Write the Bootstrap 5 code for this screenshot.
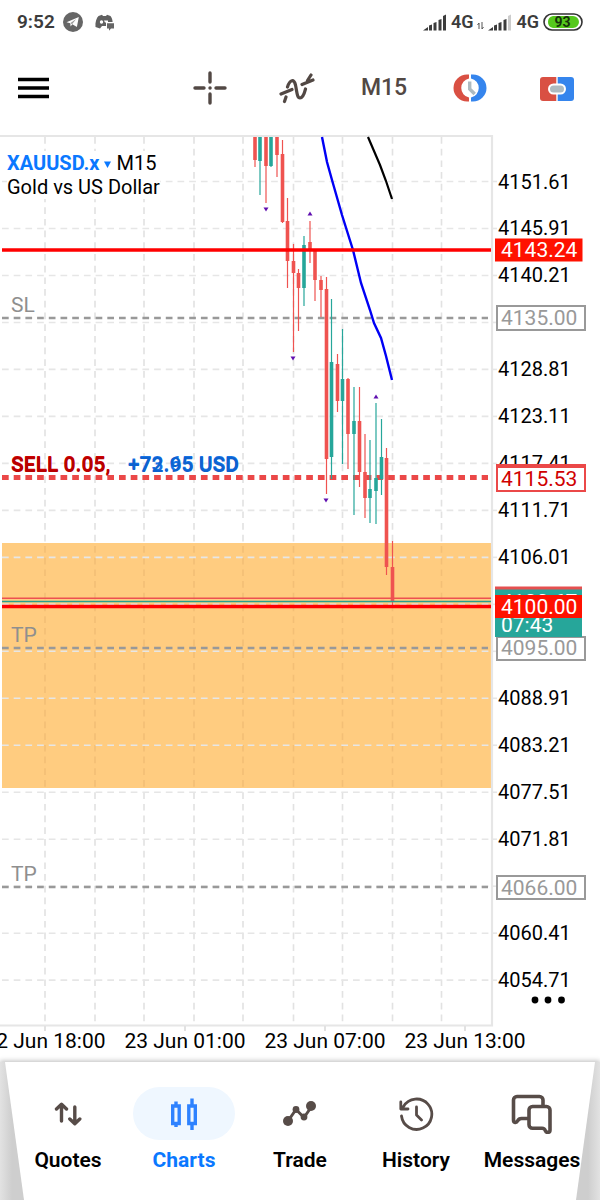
<!DOCTYPE html>
<html lang="en">
<head>
<meta charset="utf-8">
<meta name="viewport" content="width=device-width, initial-scale=1">
<title>XAUUSD.x M15</title>
<link href="https://cdn.jsdelivr.net/npm/bootstrap@5.3.0/dist/css/bootstrap.min.css" rel="stylesheet">
<style>
  body { font-family: Roboto, "Liberation Sans", sans-serif; background: #fff; color: #000; font-size: 20px; line-height: 24px; }
  button { font-family: inherit; }
  .status-strip { height: 44px; padding: 0 17px 0 17px; color: #3c3c3c; font-size: 19px; font-weight: 600; }
  .status-strip svg { display: block; }
  .network { font-size: 18px; }
  .tool-strip { height: 88px; }
  .tool-menu { width: 28%; padding-left: 18px; }
  .tool-set { width: 72%; }
  .plain-btn { border: 0; background: none; padding: 0; color: inherit; }
  .timeframe { font-size: 23px; font-weight: 500; color: #524844; }
  .chart-title { top: 19px; left: 7px; line-height: 24px; background: #fff; }
  .chart-title h1 { font-size: 20px; line-height: 24px; font-weight: 400; margin: 0; }
  .symbol-btn { color: #0a78ff; font-weight: 700; line-height: 24px; }
  .chart-more { right: 34px; bottom: 52px; line-height: 0; }
  .chart-svg { display: block; width: 100%; height: auto; }
  .chart-svg text { font-family: Roboto, "Liberation Sans", sans-serif; font-size: 20px; }
  .chart-svg .date-label, .chart-svg .price-tags text, .chart-svg .line-labels text { font-size: 21px; }
  .chart-svg .order-label { font-size: 21px; font-weight: 600; }
  .tab-shell { background: linear-gradient(90deg, #e2e2e2, #cecece 12px, #cecece calc(100% - 12px), #e2e2e2); box-shadow: 0 -1px 5px #bbb; }
  .tab-strip { min-height: 138px; padding: 25px 10px 0; background: #fff; clip-path: polygon(5px 0, calc(100% - 5px) 0, calc(100% - 24px) 100%, 24px 100%); }
  .tab-link { color: #000; font-size: 21px; font-weight: 600; text-decoration: none; flex: 1 1 0; min-width: 0; white-space: nowrap; }
  .tab-link.chosen { color: #0a78ff; font-weight: 700; }
  .tab-icon { width: 102px; height: 53px; border-radius: 27px; color: #574c48; margin-bottom: 8px; }
  .chosen .tab-icon { background: #eff7ff; color: #2e82ff; }
</style>
</head>
<body class="d-flex flex-column min-vh-100">

<div class="status-strip d-flex align-items-center justify-content-between">
  <div class="d-flex align-items-center gap-2">
    <span>9:52</span>
    <svg width="20" height="20" viewBox="0 0 20 20" aria-hidden="true"><circle cx="10" cy="10" r="10" fill="#666"/><path d="M3.500 10.200 15.800 5.100 13.900 15 9.300 12.300 7.600 14.400 7.300 11.200z" fill="#fff"/><path d="M7.500 11.100 13.200 7.100 9 12.200" fill="#999"/></svg>
    <svg class="ms-1" width="20" height="17" viewBox="0 0 20 17" aria-hidden="true"><path d="M.5 13C0 8 1.500 4 3.500 2L7 .8 8 2h3L12 .8 15.500 2C17 4 17.500 6 17.600 8H11v4H7L5 14.500z" fill="#606060"/><circle cx="6.500" cy="8" r="1.700" fill="#fff"/><path d="M9 6.500h4v2H10z" fill="#fff"/><path d="M11.200 8.300h8.800v7h-3l-2 1.700h-3.800z" fill="#fff"/><path d="M12 9.200h7v5.300h-3L14 16.700v-2.200h-2z" fill="#666"/></svg>
  </div>
  <div class="d-flex align-items-center gap-1 network">
    <svg width="24" height="17" viewBox="0 0 24 17" fill="#3c3c3c" aria-hidden="true"><path d="M0 16.500 5 13v3.500zM6 11.500l3-1v6H6zM10.500 9l3-1v8.500h-3zM15.500 6l3-1v11.500h-3zM20 2l3-1.500v16h-3z"/></svg>
    <span>4G</span>
    <svg class="mt-2" width="7" height="8" viewBox="0 0 7 8" fill="none" stroke="#555" aria-hidden="true"><path d="M2 1v6M.5 3 2 1M5 0v7M6.500 5 5 7"/></svg>
    <svg width="24" height="17" viewBox="0 0 24 17" fill="#3c3c3c" aria-hidden="true"><path d="M0 16.500 5 13v3.500zM6 11.500l3-1v6H6zM10.500 9l3-1v8.500h-3zM15.500 6l3-1v11.500h-3z"/><path d="M20 2l3-1.500v16h-3z" fill="#ccc"/></svg>
    <span>4G</span>
    <svg width="40" height="18" viewBox="0 0 40 18" aria-label="Battery 93 percent"><rect x="1" y="1" width="38" height="16" rx="8" fill="#fff" stroke="#333" stroke-width="1.600"/><path d="M10 3h20a6 6 0 0 1 0 12H10a6 6 0 0 1-5-6 6 6 0 0 1 5-6z" fill="#55c81c"/><text x="19.500" y="14" text-anchor="middle" font-size="14" font-weight="700" fill="#16320a">93</text></svg>
  </div>
</div>

<header class="tool-strip d-flex align-items-center">
  <div class="tool-menu">
    <button class="plain-btn d-block" type="button" aria-label="Menu"><svg class="d-block" width="31" height="22" viewBox="0 0 31 22"><path d="M0 2.500h31M0 11h31M0 19.500h31" stroke="#000" stroke-width="3.400"/></svg></button>
  </div>
  <div class="tool-set d-flex align-items-center">
    <button class="plain-btn flex-fill w-100" type="button" aria-label="Crosshair"><svg width="36" height="34" viewBox="0 0 36 34" fill="none" stroke="#524844" stroke-width="3.400" stroke-linecap="round"><path d="M17 2v9M17 23v9M2 17h9M23 17h9M17 17h.1"/></svg></button>
    <button class="plain-btn flex-fill w-100" type="button" aria-label="Indicators"><svg width="38" height="32" viewBox="0 0 38 32" fill="none" stroke="#524844" stroke-width="3.200" stroke-linecap="round"><path d="M2 22 13 17.500M23 12.500 34 8M5.500 29.500 7 25M8.500 15C11 7 15 7 16.500 13 18 20 18 26 21 26 24 26 25.500 21 26.500 17M28.500 8.500 32 3"/></svg></button>
    <button class="plain-btn flex-fill w-100 timeframe" type="button">M15</button>
    <button class="plain-btn flex-fill w-100" type="button" aria-label="Open clock"><svg width="34" height="28" viewBox="0 0 34 28"><path d="M16 .5H14a13.500 13.500 0 0 0 0 27h2v-4A9.700 9.700 0 0 1 16 4.500z" fill="#d95043"/><path d="M18 .5h2a13.500 13.500 0 0 1 0 27h-2v-4a9.700 9.700 0 0 0 0-19z" fill="#3585ed"/><path d="M16.700 7.500V15l5 5" fill="none" stroke="#aebbc1" stroke-width="3.400"/></svg></button>
    <button class="plain-btn flex-fill w-100" type="button" aria-label="New order"><svg width="34" height="24" viewBox="0 0 34 24"><path d="M16.300 0H3a3 3 0 0 0-3 3v18a3 3 0 0 0 3 3h13.300z" fill="#d95043"/><path d="M17.700 0H31a3 3 0 0 1 3 3v18a3 3 0 0 1-3 3H17.700z" fill="#3585ed"/><rect x="9" y="7.500" width="16" height="9" rx="4.500" fill="#aebbc1" stroke="#fff" stroke-width="2"/></svg></button>
  </div>
</header>

<main class="position-relative">
  <svg class="chart-svg" viewBox="0 132 600 930" role="img" aria-label="Gold vs US Dollar candlestick chart">
    <g id="verticals" stroke="#e2e2e2" stroke-width="1.600" stroke-dasharray="6.700 5"></g>
    <rect x="2" y="543" width="489" height="245" fill="#ffcc80"/>
    <g id="zoneVerticals" stroke="#f3bf76" stroke-width="1.600" stroke-dasharray="6.700 5"></g>
    <g id="horizontals" stroke="#e6e6e6" stroke-width="1.600"></g>
    <path d="M0 136H492V1025.500H0" fill="none" stroke="#e6e6e6" stroke-width="2.200"/>
    <path d="M45 1026v5M185 1026v5M325 1026v5M465 1026v5" stroke="#e2e2e2" stroke-width="2"/>
    <g stroke="#999" stroke-width="2.600" stroke-dasharray="6.700 5"><path d="M2 318H488"/><path d="M2 648H488"/><path d="M2 887H488"/></g>
    <path d="M2 477.500H488" stroke="#eb4848" stroke-width="5" stroke-dasharray="6.700 5"/>
    <g id="candles"></g>
    <path d="M322 137 327 162 332 180 342 215 353 250 361 283 370 310 374 323 381 338 386 356 392 380" fill="none" stroke="#0000f5" stroke-width="2.400"/>
    <path d="M368 137 380 165 386 181 392 199" fill="none" stroke="#000" stroke-width="2.200"/>
    <g fill="#6010b0"><path d="M263.500 207.500h5l-2.500 4zM290.500 356.500h5l-2.500 4zM323.500 498.500h5l-2.500 4zM307.500 215.500h5l-2.500-4zM373.500 398.500h5l-2.500-4z"/></g>
    <path d="M2 250H491M2 606.500H491" stroke="#f00" stroke-width="3.300"/>
    <path d="M2 598.300H491" stroke="#ed5050" stroke-width="1.500"/>
    <path d="M2 601.500H491" stroke="#26a08f" stroke-width="1.500"/>
    <g class="line-labels" fill="#8f8f8f"><text x="11" y="312">SL</text><text x="11" y="642">TP</text><text x="11" y="881">TP</text></g>
    <g class="order-group">
      <text class="order-label" x="11" y="471" fill="#d00000">SELL 0.05,</text><text class="order-label" x="11" y="472" fill="#b80000">SELL 0.05,</text>
      <text class="order-label" x="128" y="471" fill="#1673e6">+73.65 USD</text><text class="order-label" x="128" y="472" fill="#0d62cf">+72.95 USD</text>
    </g>
    <g id="prices"></g>
    <g class="price-tags">
      <rect x="495" y="238.500" width="87.500" height="23" fill="#f10"/><text x="501" y="257" fill="#fff">4143.24</text>
      <rect x="497" y="306" width="88" height="24" fill="#fff" stroke="#999" stroke-width="2"/><text x="501" y="325" fill="#999">4135.00</text>
      <rect x="497" y="466" width="88" height="25" fill="#fff" stroke="#eb4848" stroke-width="2"/><path d="M496 466h90" stroke="#eb4848" stroke-width="4"/><text x="501" y="486" fill="#d00000">4115.53</text>
      <rect x="497" y="637" width="88" height="23" fill="#fff" stroke="#999" stroke-width="2"/><text x="501" y="655" fill="#999">4095.00</text>
      <rect x="495" y="587" width="87" height="50" fill="#26a69a"/><path d="M495 588h87" stroke="#e55050" stroke-width="3"/>
      <text x="501" y="609" fill="#fff">4100.67</text><text x="501" y="632" fill="#fff">07:43</text>
      <rect x="495" y="595" width="87" height="23" fill="#f10"/><text x="501" y="614" fill="#fff">4100.00</text>
      <rect x="497" y="876" width="88" height="23" fill="#fff" stroke="#999" stroke-width="2"/><text x="501" y="895" fill="#999">4066.00</text>
    </g>
    <g text-anchor="middle"><text class="date-label" x="45" y="1048">22 Jun 18:00</text><text class="date-label" x="185" y="1048">23 Jun 01:00</text><text class="date-label" x="325" y="1048">23 Jun 07:00</text><text class="date-label" x="465" y="1048">23 Jun 13:00</text></g>
  </svg>
  <div class="chart-title position-absolute">
    <h1><button class="plain-btn symbol-btn" type="button">XAUUSD.x <svg width="7" height="7" viewBox="0 0 7 7" class="align-middle" aria-hidden="true"><path d="M0 .5h7L3.500 7z" fill="currentColor"/></svg></button> M15</h1>
    <div>Gold vs US Dollar</div>
  </div>
  <button class="plain-btn chart-more position-absolute" type="button" aria-label="More"><svg width="36" height="20" viewBox="0 0 36 20"><circle cx="5" cy="10" r="3.400"/><circle cx="18" cy="10" r="3.400"/><circle cx="31.500" cy="10" r="3.400"/></svg></button>
</main>

<div class="tab-shell mt-auto position-relative">
  <nav class="tab-strip d-flex align-items-start" aria-label="Main">
    <a class="tab-link d-flex flex-column align-items-center" href="#quotes"><span class="tab-icon d-flex align-items-center justify-content-center"><svg width="28" height="24" viewBox="0 0 28 24" fill="none" stroke="currentColor" stroke-width="3.400" stroke-linecap="round" stroke-linejoin="round"><path d="M7.500 19V2.500M2.500 7 7.500 2.300 12.500 7M20.800 5v16.500M15.800 17l5 4.700 5-4.700"/></svg></span>Quotes</a>
    <a class="tab-link chosen d-flex flex-column align-items-center" href="#charts" aria-current="page"><span class="tab-icon d-flex align-items-center justify-content-center"><svg width="28" height="34" viewBox="0 0 28 34" fill="none" stroke="currentColor" stroke-width="3.400"><path d="M2.700 9h6.500v17.500H2.700zM6 4.500v4M6 27v3M18.800 9h6.500v17.500h-6.500zM22 1.500v7M22 27v6"/></svg></span>Charts</a>
    <a class="tab-link d-flex flex-column align-items-center" href="#trade"><span class="tab-icon d-flex align-items-center justify-content-center"><svg width="36" height="28" viewBox="0 0 36 28" fill="currentColor"><path d="M6 21 14 9.500 22 17.500 30 6" fill="none" stroke="currentColor" stroke-width="3"/><circle cx="6" cy="21" r="5"/><circle cx="14" cy="9.500" r="3.400"/><circle cx="22" cy="17" r="3.400"/><circle cx="29" cy="6" r="5"/></svg></span>Trade</a>
    <a class="tab-link d-flex flex-column align-items-center" href="#history"><span class="tab-icon d-flex align-items-center justify-content-center"><svg width="36" height="36" viewBox="0 0 36 36" fill="none" stroke="currentColor" stroke-width="2.800" stroke-linecap="round" stroke-linejoin="round"><path d="M3.500 20A15.200 15.200 0 1 0 5.500 10.500M2.800 6v7H10M3 12.500 6 10M18.500 11v8l5 5"/></svg></span>History</a>
    <a class="tab-link d-flex flex-column align-items-center" href="#messages"><span class="tab-icon d-flex align-items-center justify-content-center"><svg width="42" height="40" viewBox="0 0 42 40" fill="none" stroke="currentColor" stroke-width="3.600" stroke-linejoin="round"><path d="M32 12V6a3.500 3.500 0 0 0-3.500-3.500H6A3.500 3.500 0 0 0 2.500 6v20c0 3 3 3 4 1 1-2 2-2.500 4-2.500h7"/><path d="M21.500 12.500h14A3.500 3.500 0 0 1 39 16v20c0 3-3.500 3-4.500 1-.7-2-1.500-2.700-3.500-2.700h-9.500A3.500 3.500 0 0 1 18 30.800V16a3.500 3.500 0 0 1 3.500-3.500z"/></svg></span>Messages</a>
  </nav>
</div>

<script src="https://cdn.jsdelivr.net/npm/bootstrap@5.3.0/dist/js/bootstrap.bundle.min.js"></script>
<script>
  const NS = 'http://www.w3.org/2000/svg';
  const draw = (parent, tag, attrs, text) => {
    const node = document.createElementNS(NS, tag);
    for (const key in attrs) node.setAttribute(key, attrs[key]);
    if (text) node.textContent = text;
    document.getElementById(parent).appendChild(node);
  };
  [45, 95, 144, 194, 243, 293.5, 342.5, 392.5, 441.5].forEach(x => {
    draw('verticals', 'path', { d: `M${x} 137V1025` });
    draw('zoneVerticals', 'path', { d: `M${x} 546V788` });
  });
  const TOP_PRICE = 4151.61, STEP = 5.7;
  const covered = [3, 9, 10, 15];
  for (let i = 0; i < 18; i++) {
    const y = 181.5 + i * 46.98;
    draw('horizontals', 'path', { d: `M2 ${y}H491`, 'stroke-dasharray': '6.7 5' });
    draw('horizontals', 'path', { d: `M492 ${y}h5` });
    if (!covered.includes(i)) draw('prices', 'text', { x: 498, y: Math.round(y + 7) }, (TOP_PRICE - i * STEP).toFixed(2));
  }
  // x, direction, wick top, body top, body bottom, wick bottom
  [
    [255,'d',137,137,160,167],[260,'u',137,137,161,195],[266,'d',137,137,166,203],[271,'u',137,137,166,167],
    [277,'d',137,137,155,177],[282.5,'d',140,154,222,223],[287.5,'d',198,221,261,288],[293.5,'d',244,261,273,352],
    [298.5,'d',269,273,288,331],[304,'u',236,245,288,306],[310,'d',221,242,251,263],[315,'d',250,251,280,301],
    [321,'d',276,280,290,317],[326.5,'d',277,289,459,494],[331.5,'u',299,362,457,479],[337.5,'d',354,364,401,412],
    [342.5,'u',329,379,401,464],[348,'d',378,379,434,469],[354,'u',387,421,434,515],[359.5,'d',387,421,472,487],
    [365,'d',434,472,498,518],[370,'u',440,489,498,523],[376,'u',403,478,491,524],[381.5,'u',419,457,479,495],
    [386.5,'d',448,458,567,575],[392.5,'d',541,567,602,605]
  ].forEach(([x, dir, high, top, bottom, low]) => {
    const color = dir === 'u' ? '#26a69a' : '#ef5350';
    draw('candles', 'path', { d: `M${x} ${high}V${low}`, stroke: color, 'stroke-width': 1.2 });
    draw('candles', 'path', { d: `M${x} ${top}V${bottom}`, stroke: color, 'stroke-width': 3.6 });
  });
</script>
</body>
</html>
